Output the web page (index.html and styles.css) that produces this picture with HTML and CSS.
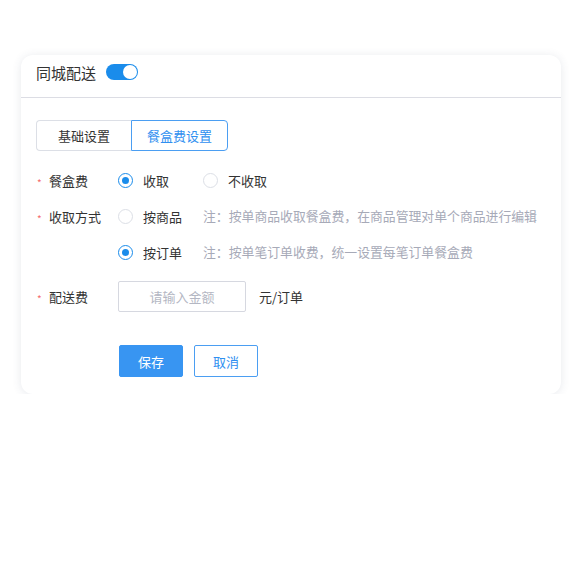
FILE: index.html
```html
<!DOCTYPE html>
<html lang="zh-CN">
  <head>
    <meta charset="UTF-8" />
    <meta name="viewport" content="width=device-width, initial-scale=1.0" />
    <title>同城配送</title>
    <link rel="stylesheet" href="styles.css">
  </head>
  <body>
    <div class="card">
      <div class="card-header">
        <span class="card-title">同城配送</span>
        <span class="switch is-on"><span class="switch-knob"></span></span>
      </div>

      <div class="card-body">
        <div class="tabs">
          <div class="tab">基础设置</div>
          <div class="tab is-active">餐盒费设置</div>
        </div>

        <div class="form-row">
          <div class="form-label"><span class="star">*</span>餐盒费</div>
          <div class="form-control">
            <label class="radio is-checked"><span class="radio-dot"></span>收取</label>
            <label class="radio"><span class="radio-dot"></span>不收取</label>
          </div>
        </div>

        <div class="form-row">
          <div class="form-label"><span class="star">*</span>收取方式</div>
          <div class="form-control">
            <label class="radio"><span class="radio-dot"></span>按商品</label>
            <span class="note">注：按单商品收取餐盒费，在商品管理对单个商品进行编辑</span>
          </div>
        </div>

        <div class="form-row">
          <div class="form-label"></div>
          <div class="form-control">
            <label class="radio is-checked"><span class="radio-dot"></span>按订单</label>
            <span class="note">注：按单笔订单收费，统一设置每笔订单餐盒费</span>
          </div>
        </div>

        <div class="form-row form-row-input">
          <div class="form-label"><span class="star">*</span>配送费</div>
          <div class="form-control">
            <input class="amount" type="text" placeholder="请输入金额" />
            <span class="unit">元/订单</span>
          </div>
        </div>

        <div class="actions">
          <button class="btn btn-primary">保存</button>
          <button class="btn btn-plain">取消</button>
        </div>
      </div>
    </div>
  </body>
</html>
```

FILE: styles.css
```css
body {
  margin: 0;
  padding: 55px 0 0 21px;
  background: #fff;
  font-family: "Noto Sans CJK SC", "Noto Sans", sans-serif;
  font-size: 13px;
  color: #333;
}

.card {
  width: 540px;
  background: #fff;
  border-radius: 12px;
  box-shadow: 0 1px 10px rgba(60, 70, 110, 0.12);
}

.card-header {
  display: flex;
  align-items: center;
  height: 34px;
  padding: 0 15px 8px;
  border-bottom: 1px solid #dcdde4;
}

.card-title {
  font-size: 15px;
  line-height: 1;
  color: #333;
  margin-right: 10px;
}

.switch {
  position: relative;
  width: 32px;
  height: 16px;
  border-radius: 8px;
  background: #dcdfe6;
}

.switch.is-on {
  background: #1a8ceb;
}

.switch-knob {
  position: absolute;
  top: 1px;
  left: 1px;
  width: 14px;
  height: 14px;
  border-radius: 50%;
  background: #fff;
}

.switch.is-on .switch-knob {
  left: 17px;
}

.card-body {
  padding: 22px 15px 17px;
}

.tabs {
  display: flex;
  margin-bottom: 11px;
}

.tab {
  height: 31px;
  line-height: 30px;
  box-sizing: border-box;
  border: 1px solid #dcdfe6;
  color: #333;
  font-size: 13px;
  text-align: center;
}

.tab:first-child {
  width: 95px;
  border-radius: 4px 0 0 4px;
  border-right: none;
}

.tab.is-active {
  width: 97px;
  border-color: #4b9ef2;
  color: #2f8ff0;
  border-radius: 0 4px 4px 0;
}

.form-row {
  display: flex;
  align-items: center;
  height: 36px;
  line-height: 1;
}

.form-label {
  width: 82px;
  flex-shrink: 0;
  display: flex;
  align-items: center;
  color: #333;
}

.star {
  width: 12px;
  padding: 5px 0 0 1px;
  color: #f56c6c;
  font-size: 10px;
}

.form-control {
  display: flex;
  align-items: center;
}

.radio {
  display: flex;
  align-items: center;
  width: 85px;
  color: #333;
}

.radio-dot {
  box-sizing: border-box;
  width: 15px;
  height: 15px;
  border-radius: 50%;
  border: 1px solid #dcdfe6;
  margin-right: 10px;
  display: flex;
  align-items: center;
  justify-content: center;
}

.radio.is-checked .radio-dot {
  border-color: #1a8ceb;
}

.radio.is-checked .radio-dot::after {
  content: "";
  width: 7px;
  height: 7px;
  border-radius: 50%;
  background: #1a8ceb;
}

.note {
  color: #a7aab8;
  font-size: 12.85px;
  white-space: nowrap;
}

.form-row-input {
  height: 31px;
  margin-top: 11px;
}

.amount {
  box-sizing: border-box;
  width: 128px;
  height: 31px;
  border: 1px solid #d6d8e0;
  border-radius: 2px;
  text-align: center;
  font-family: inherit;
  font-size: 13px;
  outline: none;
  margin-right: 13px;
}

.amount::placeholder {
  color: #b4b7c3;
}

.unit {
  color: #333;
}

.actions {
  display: flex;
  gap: 11px;
  margin-top: 33px;
  padding-left: 83px;
}

.btn {
  width: 64px;
  height: 32px;
  font-family: inherit;
  font-size: 13px;
  border-radius: 2px;
  cursor: pointer;
}

.btn-primary {
  background: #3895f2;
  border: 1px solid #3895f2;
  color: #fff;
}

.btn-plain {
  background: #fff;
  border: 1px solid #4b9ef2;
  color: #2f8ff0;
}
```
